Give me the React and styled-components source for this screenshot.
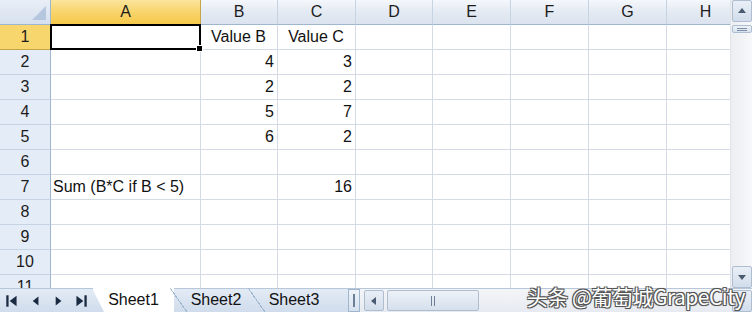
import React from 'react';
import styled, { createGlobalStyle } from 'styled-components';

const GlobalStyle = createGlobalStyle`
  html, body { margin: 0; padding: 0; background: #fff; }
  body { font-family: "Liberation Sans", Arial, sans-serif; }
`;

const COLS = ['A', 'B', 'C', 'D', 'E', 'F', 'G', 'H'];
const WIDTHS = [150, 77, 78, 77, 78, 78, 78, 78];

const data = {
  1: { B: 'Value B', C: 'Value C' },
  2: { B: 4, C: 3 },
  3: { B: 2, C: 2 },
  4: { B: 5, C: 7 },
  5: { B: 6, C: 2 },
  7: { A: 'Sum (B*C if B < 5)', C: 16 },
};
const centered = { 1: true };

const Window = styled.div`
  width: 752px;
  height: 312px;
  display: flex;
  flex-direction: column;
  overflow: hidden;
  position: relative;
`;

const Top = styled.div`
  display: flex;
  height: 288px;
`;

const Sheet = styled.div`
  flex: 1;
  position: relative;
  overflow: hidden;
  display: grid;
  grid-template-columns: 51px ${WIDTHS.map((w) => w + 'px').join(' ')};
  grid-auto-rows: 25px;
  align-content: start;
`;

const Corner = styled.div`
  box-sizing: border-box;
  background: linear-gradient(#e9eef6, #d6e0ee);
  border-right: 1px solid #9eb6ce;
  border-bottom: 1px solid #9eb6ce;
  position: relative;
  &::after {
    content: '';
    position: absolute;
    right: 4px;
    bottom: 4px;
    border-style: solid;
    border-width: 0 0 14px 14px;
    border-color: transparent transparent #b5c7df transparent;
  }
`;

const ColHead = styled.div`
  box-sizing: border-box;
  display: flex;
  align-items: center;
  justify-content: center;
  font-size: 16px;
  color: #1c1c1c;
  border-right: 1px solid ${(p) => (p.$active ? '#c5a54a' : '#c5d3e3')};
  border-bottom: 1px solid #9eb6ce;
  background: ${(p) =>
    p.$active
      ? 'linear-gradient(#fbe59d, #f8d46b 50%, #f6c94b)'
      : 'linear-gradient(#f4f7fb, #e4eaf3 50%, #dae3ef)'};
`;

const RowHead = styled.div`
  box-sizing: border-box;
  display: flex;
  align-items: center;
  justify-content: center;
  font-size: 16px;
  color: #1c1c1c;
  border-right: 1px solid #9eb6ce;
  border-bottom: 1px solid ${(p) => (p.$active ? '#c5a54a' : '#c5d3e3')};
  background: ${(p) => (p.$active ? '#f8d66e' : '#e4ecf7')};
`;

const Cell = styled.div`
  box-sizing: border-box;
  border-right: 1px solid #d4dbe6;
  border-bottom: 1px solid #d4dbe6;
  font-size: 16px;
  color: #111;
  display: flex;
  align-items: center;
  justify-content: ${(p) => p.$align};
  padding: 0 3px 0 2px;
  white-space: nowrap;
  overflow: ${(p) => (p.$spill ? 'visible' : 'hidden')};
`;

const Selection = styled.div`
  position: absolute;
  left: 50px;
  top: 24px;
  width: 151px;
  height: 26px;
  box-sizing: border-box;
  border: 2px solid #000;
  pointer-events: none;
  &::after {
    content: '';
    position: absolute;
    right: -4px;
    bottom: -4px;
    width: 5px;
    height: 5px;
    background: #000;
    border: 1px solid #fff;
  }
`;

const VScroll = styled.div`
  width: 22px;
  box-sizing: border-box;
  display: flex;
  flex-direction: column;
  align-items: center;
  background: linear-gradient(90deg, #eceef2, #f7f8fa);
  border-left: 1px solid #e0e4ea;
`;

const ArrowBtn = styled.div`
  box-sizing: border-box;
  width: ${(p) => p.$w || 20}px;
  height: ${(p) => p.$h || 21}px;
  border: 1px solid #aebdd0;
  border-radius: 2px;
  background: linear-gradient(#e9eff7, #d2ddeb);
  display: flex;
  align-items: center;
  justify-content: center;
  flex-shrink: 0;
`;

const Splitter = styled.div`
  margin-top: 3px;
  width: 20px;
  height: 8px;
  box-sizing: border-box;
  border: 1px solid #aebdd0;
  border-radius: 2px;
  background: linear-gradient(#eef3f9, #d7e1ee);
  display: flex;
  flex-direction: column;
  justify-content: center;
  align-items: center;
  gap: 1px;
  span {
    width: 10px;
    height: 1px;
    background: #7d8fa8;
  }
`;

const Spacer = styled.div`
  flex: 1;
`;

const Bottom = styled.div`
  height: 24px;
  display: flex;
  align-items: stretch;
  background: linear-gradient(#e3ebf5, #d0dcec);
  border-top: 1px solid #b7c6d9;
  box-sizing: border-box;
`;

const Nav = styled.div`
  display: flex;
  width: 92px;
`;

const NavBtn = styled.div`
  width: 23px;
  display: flex;
  align-items: center;
  justify-content: center;
`;

const Tabs = styled.div`
  display: flex;
  align-items: stretch;
`;

const Tab = styled.div`
  width: 82px;
  margin-right: -4px;
  box-sizing: border-box;
  display: flex;
  align-items: center;
  justify-content: center;
  font-size: 16px;
  color: #111;
  background: ${(p) => (p.$active ? '#fff' : 'transparent')};
  margin-top: -1px;
  clip-path: polygon(0 0, 100% 0, 100% 100%, 12px 100%);
  border-left: ${(p) => (p.$active ? '1px solid #9eb6ce' : 'none')};
  position: relative;
  &::before {
    content: '';
    position: absolute;
    left: 0;
    top: 0;
    width: 17px;
    height: 24px;
    background: linear-gradient(
      to top right,
      transparent calc(50% - 0.5px),
      #9eb6ce calc(50% - 0.5px),
      #9eb6ce calc(50% + 0.5px),
      transparent calc(50% + 0.5px)
    );
    display: ${(p) => (p.$active ? 'none' : 'block')};
  }
`;

const TabLabel = styled.span`
  padding-left: ${(p) => (p.$active ? 0 : 10)}px;
`;

const HSplit = styled.div`
  margin-left: 22px;
  width: 12px;
  box-sizing: border-box;
  border: 1px solid #9eb6ce;
  background: linear-gradient(#eef3f9, #d7e1ee);
  display: flex;
  align-items: center;
  justify-content: center;
  span {
    width: 2px;
    height: 13px;
    background: #6d7f96;
  }
`;

const HScroll = styled.div`
  flex: 1;
  display: flex;
  align-items: center;
  padding-left: 4px;
  gap: 3px;
  background: linear-gradient(#f3f5f8, #e7ebf1);
`;

const Thumb = styled.div`
  width: 92px;
  height: 21px;
  box-sizing: border-box;
  border: 1px solid #aebdd0;
  border-radius: 2px;
  background: linear-gradient(#edf2f8, #d5dfec);
  display: flex;
  align-items: center;
  justify-content: center;
  gap: 2px;
  span {
    width: 1px;
    height: 10px;
    background: #6d7f96;
  }
`;

const Watermark = styled.div`
  position: absolute;
  right: 7px;
  bottom: 5px;
  font-family: "Noto Sans CJK SC", "Liberation Sans", sans-serif;
  font-size: 21px;
  color: #fff;
  letter-spacing: -0.5px;
  text-shadow: -1px -1px 0 #555, 1px -1px 0 #555, -1px 1px 0 #555, 1px 1px 0 #555,
    0 0 2px #333;
  line-height: 1;
  white-space: nowrap;
`;

const Tri = ({ dir, color = '#4a5a70', size = 7 }) => {
  const pts = {
    up: '0,6 4,1 8,6',
    down: '0,2 8,2 4,7',
    left: '6,0 6,8 1,4',
    right: '2,0 2,8 7,4',
  }[dir];
  return (
    <svg width={size + 1} height={size + 1} viewBox="0 0 8 8">
      <polygon points={pts} fill={color} />
    </svg>
  );
};

const NavIcon = ({ kind }) => (
  <svg width="16" height="16" viewBox="0 0 14 14">
    {kind === 'first' && (
      <>
        <rect x="2" y="2" width="2" height="10" fill="#1a2a40" />
        <polygon points="11,2.5 11,11.5 5,7" fill="#1a2a40" />
      </>
    )}
    {kind === 'prev' && <polygon points="10,3 10,11 5,7" fill="#1a2a40" />}
    {kind === 'next' && <polygon points="5,3 5,11 10,7" fill="#1a2a40" />}
    {kind === 'last' && (
      <>
        <polygon points="3,2.5 3,11.5 9,7" fill="#1a2a40" />
        <rect x="10" y="2" width="2" height="10" fill="#1a2a40" />
      </>
    )}
  </svg>
);

const rows = Array.from({ length: 11 }, (_, i) => i + 1);

export default function App() {
  return (
    <>
      <GlobalStyle />
      <Window>
        <Top>
          <Sheet>
            <Corner />
            {COLS.map((c) => (
              <ColHead key={c} $active={c === 'A'}>
                {c}
              </ColHead>
            ))}
            {rows.map((r) => (
              <React.Fragment key={r}>
                <RowHead $active={r === 1}>{r}</RowHead>
                {COLS.map((c) => {
                  const v = data[r] && data[r][c];
                  const align =
                    typeof v === 'number'
                      ? 'flex-end'
                      : centered[r]
                      ? 'center'
                      : 'flex-start';
                  return (
                    <Cell key={c} $align={align} $spill={c === 'A'}>
                      {v}
                    </Cell>
                  );
                })}
              </React.Fragment>
            ))}
            <Selection />
          </Sheet>
          <VScroll>
            <ArrowBtn $h={22}>
              <Tri dir="up" />
            </ArrowBtn>
            <Splitter>
              <span />
              <span />
            </Splitter>
            <Spacer />
            <ArrowBtn $h={22}>
              <Tri dir="down" />
            </ArrowBtn>
          </VScroll>
        </Top>
        <Bottom>
          <Nav>
            <NavBtn>
              <NavIcon kind="first" />
            </NavBtn>
            <NavBtn>
              <NavIcon kind="prev" />
            </NavBtn>
            <NavBtn>
              <NavIcon kind="next" />
            </NavBtn>
            <NavBtn>
              <NavIcon kind="last" />
            </NavBtn>
          </Nav>
          <Tabs>
            <Tab $active>
              <TabLabel $active>Sheet1</TabLabel>
            </Tab>
            <Tab>
              <TabLabel>Sheet2</TabLabel>
            </Tab>
            <Tab>
              <TabLabel>Sheet3</TabLabel>
            </Tab>
          </Tabs>
          <HSplit>
            <span />
          </HSplit>
          <HScroll>
            <ArrowBtn $w={20} $h={21}>
              <Tri dir="left" />
            </ArrowBtn>
            <Thumb>
              <span />
              <span />
            </Thumb>
            <Spacer />
            <ArrowBtn $w={20} $h={22}>
              <Tri dir="right" />
            </ArrowBtn>
          </HScroll>
        </Bottom>
        <Watermark>头条 @葡萄城GrapeCity</Watermark>
      </Window>
    </>
  );
}
